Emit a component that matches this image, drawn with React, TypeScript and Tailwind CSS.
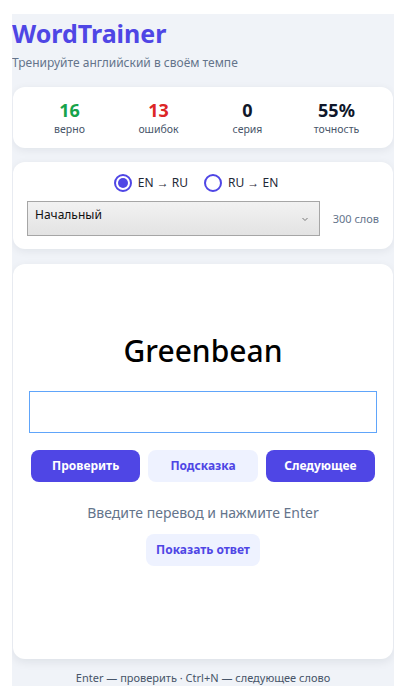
import React from 'react';

const stats = [
  { value: '16', label: 'верно', color: 'text-[#16a34a]' },
  { value: '13', label: 'ошибок', color: 'text-[#dc2626]' },
  { value: '0', label: 'серия', color: 'text-[#0f172a]' },
  { value: '55%', label: 'точность', color: 'text-[#0f172a]' },
];

const Radio: React.FC<{ checked?: boolean; label: string }> = ({ checked, label }) => (
  <label className="flex items-center gap-[6px] text-[12px] text-[#1f2937]">
    <span className="w-[18px] h-[18px] rounded-full border-2 border-[#4f46e5] flex items-center justify-center bg-white">
      {checked && <span className="w-[10px] h-[10px] rounded-full bg-[#4f46e5]" />}
    </span>
    {label}
  </label>
);

export default function App() {
  const [answer, setAnswer] = React.useState('');

  return (
    <div className="bg-white min-h-[699px] px-[12px] pt-[14px] font-['Noto_Sans','Open_Sans',sans-serif]">
      <div className="bg-[#f0f3f8] h-[672px] overflow-hidden">
        <h1 className="text-[25px] leading-[34px] font-bold text-[#4f46e5] pt-[2px]">WordTrainer</h1>
        <p className="text-[12px] leading-[18px] text-[#64748b] mt-[4px]">Тренируйте английский в своём темпе</p>

        <div className="mx-[1px] mt-[15px] bg-white rounded-[12px] shadow-[0_2px_8px_rgba(15,23,42,0.07)] h-[61px] px-[12px] grid grid-cols-4 items-center">
          {stats.map((s) => (
            <div key={s.label} className="flex flex-col items-center">
              <span className={`text-[18px] leading-[22px] font-bold ${s.color}`}>{s.value}</span>
              <span className="text-[10.5px] leading-[15px] text-[#475569] mt-[1px]">{s.label}</span>
            </div>
          ))}
        </div>

        <div className="mx-[1px] mt-[14px] bg-white rounded-[12px] shadow-[0_2px_8px_rgba(15,23,42,0.07)] h-[87px] px-[14px] pt-[12px]">
          <div className="flex justify-center gap-[16px] pr-[14px]">
            <Radio checked label="EN → RU" />
            <Radio label="RU → EN" />
          </div>
          <div className="flex items-center mt-[9px] gap-[13px]">
            <div className="flex-1 h-[35px] border border-[#a6a6a6] bg-gradient-to-b from-[#f2f2f2] to-[#e3e3e3] flex items-start justify-between pl-[7px] pr-[10px] pt-[5px]">
              <span className="text-[12px] leading-[16px] text-[#111]">Начальный</span>
              <svg width="8" height="8" viewBox="0 0 8 8" className="mt-[8px]">
                <path d="M1.5 3 L4 5.5 L6.5 3" fill="none" stroke="#777" strokeWidth="1" />
              </svg>
            </div>
            <span className="whitespace-nowrap text-[11px] text-[#64748b] mt-[2px]">300 слов</span>
          </div>
        </div>

        <div className="mx-[1px] mt-[15px] bg-white rounded-[12px] shadow-[0_3px_10px_rgba(15,23,42,0.08)] h-[395px] px-[16px] flex flex-col items-center">
          <div className="mt-[67px] text-[30px] leading-[40px] font-medium text-black">Greenbean</div>
          <input
            value={answer}
            onChange={(e) => setAnswer(e.target.value)}
            className="mt-[20px] w-full h-[42px] border border-[#60a5fa] outline-none px-3 text-[15px]"
          />
          <div className="w-full grid grid-cols-3 gap-[8px] mt-[17px] px-[2px]">
            <button className="h-[32px] rounded-[8px] bg-[#4f46e5] text-white text-[12px] font-bold">Проверить</button>
            <button className="h-[32px] rounded-[8px] bg-[#eef2ff] text-[#4f46e5] text-[12px] font-bold">Подсказка</button>
            <button className="h-[32px] rounded-[8px] bg-[#4f46e5] text-white text-[12px] font-bold">Следующее</button>
          </div>
          <p className="mt-[21px] text-[14px] leading-[20px] text-[#64748b]">Введите перевод и нажмите Enter</p>
          <button className="mt-[11px] h-[32px] px-[10px] rounded-[8px] bg-[#eef2ff] text-[#4f46e5] text-[12px] font-bold">
            Показать ответ
          </button>
        </div>

        <p className="mt-[12px] text-center text-[11px] leading-[14px] text-[#475569]">
          Enter — проверить · Ctrl+N — следующее слово
        </p>
      </div>
    </div>
  );
}
